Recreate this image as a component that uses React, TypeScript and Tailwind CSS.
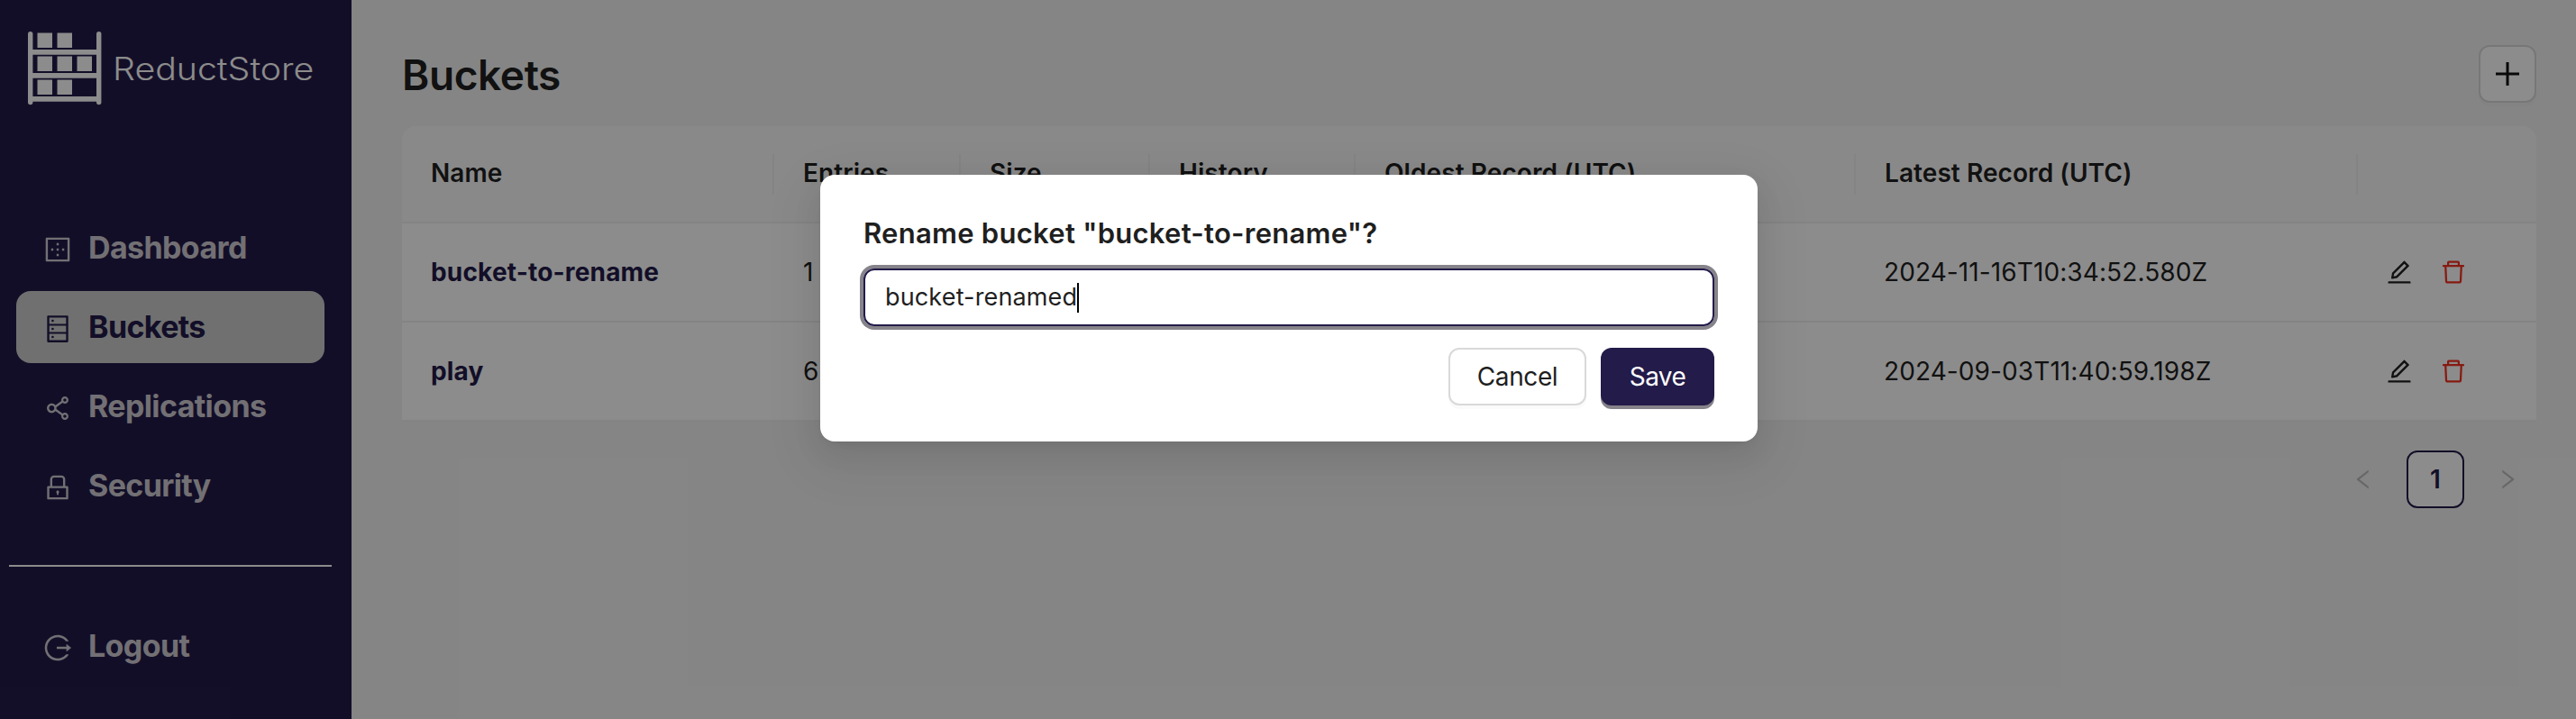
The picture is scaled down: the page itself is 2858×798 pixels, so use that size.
import type { ReactNode } from "react";
import {
  AiOutlineBorderOuter,
  AiOutlineDatabase,
  AiOutlineDelete,
  AiOutlineEdit,
  AiOutlineLeft,
  AiOutlineLock,
  AiOutlineLogout,
  AiOutlineRight,
  AiOutlineShareAlt,
} from "react-icons/ai";

function Logo() {
  return (
    <div className="flex h-[82px] items-center pl-[31px]">
      <svg width="82" height="82" viewBox="0 0 82 82" fill="#ffffff">
        <g stroke="#ffffff" strokeWidth="5.4" strokeLinecap="round">
          <path d="M2.7 2.7V78.5" />
          <path d="M78.7 2.7V78.5" />
        </g>
        <g stroke="#ffffff" strokeWidth="5.8">
          <path d="M3 22.8H79" />
          <path d="M3 48.8H79" />
          <path d="M3 74.8H79" />
        </g>
        <path d="M10.5 1.6h16.5v16.5H10.5zM32.5 1.6h16.5v16.5H32.5z" />
        <path d="M10.5 27.6h16.5v16.5H10.5zM32.5 27.6h16.5v16.5H32.5zM54.5 27.6h16.5v16.5H54.5z" />
        <path d="M10.5 53.6h16.5v16.5H10.5zM32.5 53.6h16.5v16.5H32.5z" />
      </svg>
      <span className="ml-[12px] origin-left scale-x-[1.122] text-[35px] leading-none font-light text-white">
        ReductStore
      </span>
    </div>
  );
}

function NavItem({ icon, label, active = false }: { icon: ReactNode; label: string; active?: boolean }) {
  return (
    <div
      className={
        active
          ? "flex h-20 items-center rounded-2xl bg-[#cccccc] pl-[29px] text-[#231b49]"
          : "flex h-20 items-center rounded-2xl pl-[29px] text-[#cfccd3]"
      }
    >
      <span className="mt-1 text-[34px]">{icon}</span>
      <span className="ml-[17px] pb-[2px] text-[34px] font-bold tracking-[-0.62px]">{label}</span>
    </div>
  );
}

const columns = ["Name", "Entries", "Size", "History", "Oldest Record (UTC)", "Latest Record (UTC)", ""];

const rows = [
  { name: "bucket-to-rename", entries: "1", latest: "2024-11-16T10:34:52.580Z" },
  { name: "play", entries: "6", latest: "2024-09-03T11:40:59.198Z" },
];

const gridCols = "grid grid-cols-[413px_207px_210px_228px_555px_557px_198px] items-center";

function BucketTable() {
  return (
    <div className="mt-[26px] overflow-hidden rounded-t-2xl bg-white text-[28px] text-[#1f1f1f]">
      <div className={`${gridCols} h-[108px] border-b-2 border-[#f0f0f0] bg-[#fafafa]`}>
        {columns.map((c, i) => (
          <div
            key={i}
            className={
              i < columns.length - 1
                ? "flex h-[45px] items-center border-r-2 border-[#f0f0f0] pb-[2px] pl-8 font-semibold tracking-[0.08px]"
                : "h-[45px]"
            }
          >
            <span className="whitespace-nowrap">{c}</span>
          </div>
        ))}
      </div>
      {rows.map((r) => (
        <div key={r.name} className={`${gridCols} h-[110px] border-b-2 border-[#f0f0f0]`}>
          <div className="pl-8 font-bold tracking-[0.18px] text-[#231b49]">{r.name}</div>
          <div className="pl-8">{r.entries}</div>
          <div />
          <div />
          <div />
          <div className="pl-[31px] tracking-[0.1px]">{r.latest}</div>
          <div className="flex items-center gap-7 pl-[30px]">
            <AiOutlineEdit className="size-8" />
            <AiOutlineDelete className="size-8 text-[#f5311f]" />
          </div>
        </div>
      ))}
    </div>
  );
}

function RenameDialog() {
  return (
    <div className="h-[296px] w-[1040px] rounded-2xl bg-white px-12 pt-10 text-[#1f1f1f] shadow-[0_12px_32px_0_rgba(0,0,0,0.08),0_6px_12px_-8px_rgba(0,0,0,0.12),0_18px_56px_16px_rgba(0,0,0,0.05)]">
      <h2 className="h-12 text-[31px] leading-[49px] font-semibold tracking-[0.27px]">
        Rename bucket "bucket-to-rename"?
      </h2>
      <div className="mt-4 flex h-16 items-center rounded-xl border-2 border-[#231b49] pl-[22px] shadow-[0_0_0_4px_#86838a]">
        <span className="text-[27px] tracking-[0.15px]">bucket-renamed</span>
        <span className="h-[33px] w-[2px] bg-black" />
      </div>
      <div className="mt-6 flex justify-end gap-4 text-[28px]">
        <button className="h-16 w-[153px] rounded-xl border-2 border-[#d9d9d9] bg-white tracking-[-0.4px] shadow-[0_4px_0_rgba(0,0,0,0.02)]">
          Cancel
        </button>
        <button className="h-16 w-[126px] rounded-xl bg-[#231b49] tracking-[-0.6px] text-white shadow-[0_4px_0_#86838a]">
          Save
        </button>
      </div>
    </div>
  );
}

export default function App() {
  return (
    <div className="relative flex h-[798px] w-[2858px] overflow-hidden bg-[#f3f3f3] font-['Inter',sans-serif]">
      <aside className="flex w-[390px] shrink-0 flex-col bg-[#231b49] pt-[35px]">
        <Logo />
        <nav className="mt-[118px] flex flex-col gap-2 pr-[30px] pl-[18px]">
          <NavItem icon={<AiOutlineBorderOuter />} label="Dashboard" />
          <NavItem icon={<AiOutlineDatabase />} label="Buckets" active />
          <NavItem icon={<AiOutlineShareAlt />} label="Replications" />
          <NavItem icon={<AiOutlineLock />} label="Security" />
        </nav>
        <div className="mt-12 mr-[22px] ml-[10px] h-[2px] bg-white" />
        <nav className="mt-12 pr-[30px] pl-[18px]">
          <NavItem icon={<AiOutlineLogout />} label="Logout" />
        </nav>
      </aside>

      <main className="flex-1 pt-[50px] pr-[44px] pl-[56px]">
        <div className="flex h-16 items-center justify-between">
          <h1 className="pt-[2px] text-[46px] leading-none font-semibold tracking-[-0.4px] text-[#1f1f1f]">Buckets</h1>
          <button className="flex size-16 items-center justify-center rounded-xl border-2 border-[#d9d9d9] bg-white shadow-[0_4px_0_rgba(0,0,0,0.02)]">
            <svg width="26" height="26" viewBox="0 0 26 26" stroke="#111111" strokeWidth="3">
              <path d="M13 0V26M0 13H26" />
            </svg>
          </button>
        </div>
        <BucketTable />
        <div className="mt-8 flex justify-end gap-4">
          <div className="flex size-16 items-center justify-center text-[#bcbcbc]">
            <AiOutlineLeft className="size-7" />
          </div>
          <div className="flex size-16 items-center justify-center rounded-xl border-2 border-[#231b49] bg-white text-[28px] font-semibold text-[#231b49]">
            1
          </div>
          <div className="flex size-16 items-center justify-center text-[#bcbcbc]">
            <AiOutlineRight className="size-7" />
          </div>
        </div>
      </main>

      <div className="absolute inset-0 flex justify-center bg-black/45 pt-[194px] pl-[2px]">
        <RenameDialog />
      </div>
    </div>
  );
}
